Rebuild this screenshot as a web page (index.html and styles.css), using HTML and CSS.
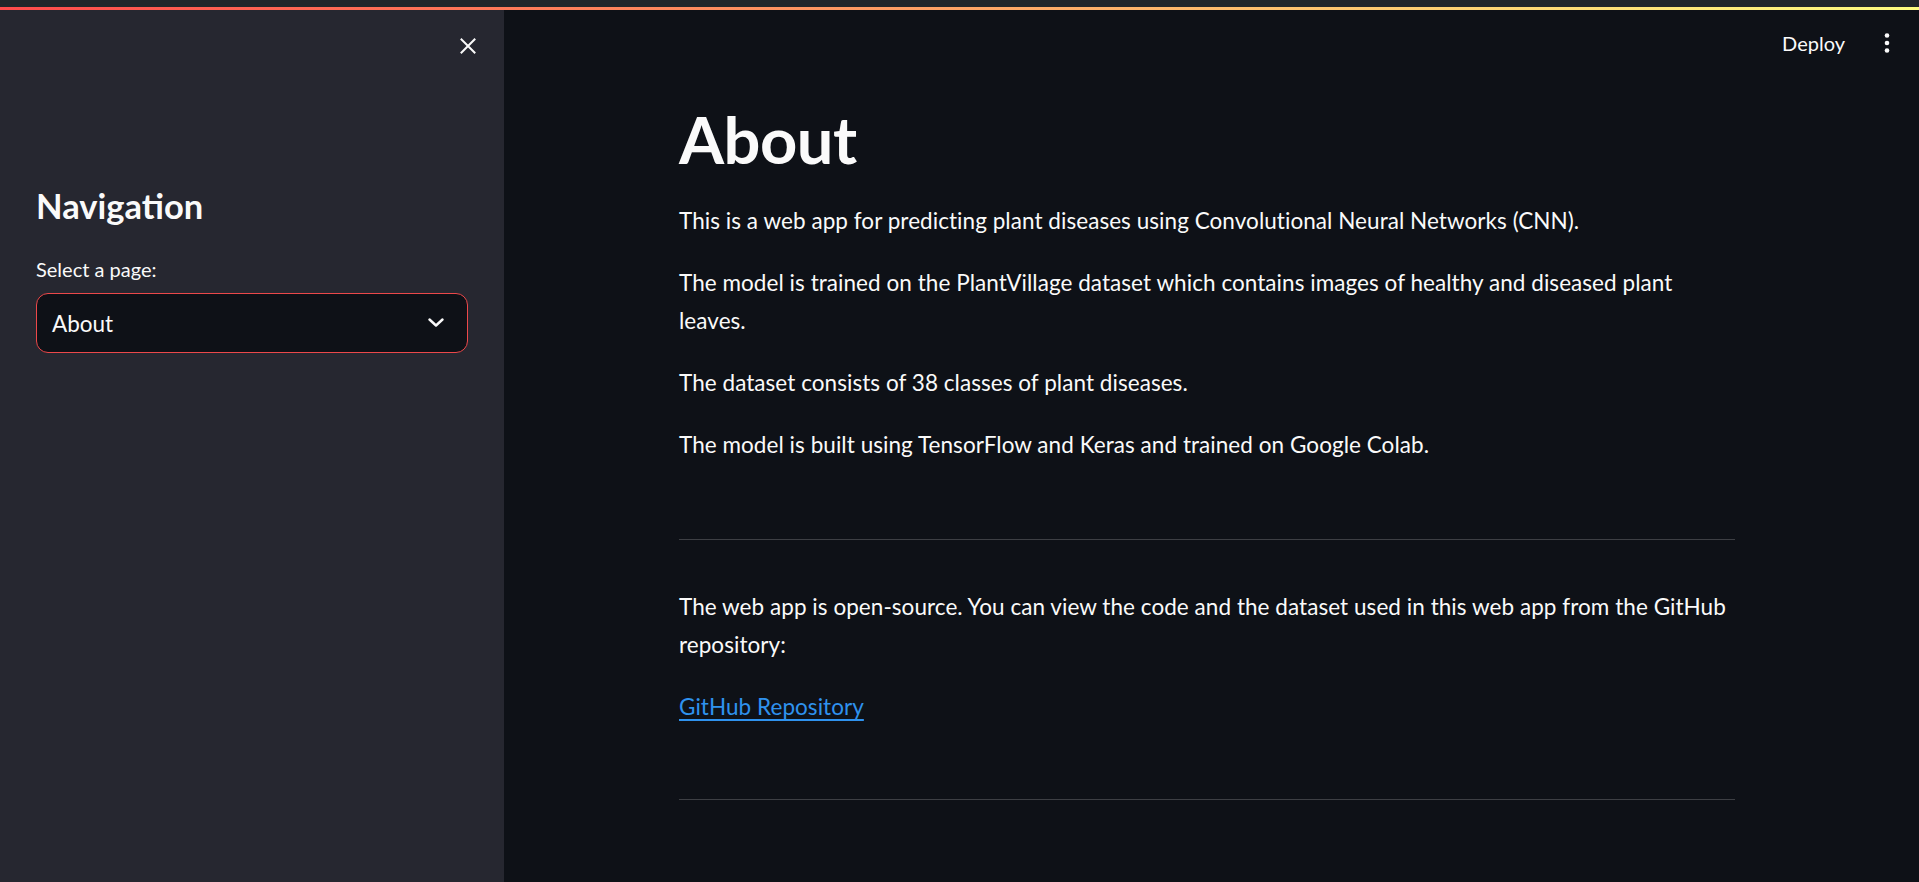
FILE: index.html
```html
<!DOCTYPE html>
<html lang="en">
<head>
<meta charset="utf-8">
<title>About</title>
<link rel="stylesheet" href="styles.css">
</head>
<body>
<div class="chrome-strip"></div>
<div class="decoration"></div>
<div class="app">
  <aside class="sidebar">
    <div class="sidebar-header">
      <svg class="close-icon" width="16" height="16" viewBox="0 0 16 16" aria-hidden="true">
        <path d="M1.5 1.5 L14.5 14.5 M14.5 1.5 L1.5 14.5" stroke="#fafafa" stroke-width="2" stroke-linecap="square" fill="none"/>
      </svg>
    </div>
    <div class="sidebar-content">
      <h1 class="sidebar-title">Navigation</h1>
      <label class="field-label">Select a page:</label>
      <div class="select">
        <span class="select-value">About</span>
        <svg class="chevron" width="16" height="16" viewBox="0 0 16 16" aria-hidden="true">
          <path d="M1.5 4.5 L8 10.5 L14.5 4.5" stroke="#fafafa" stroke-width="2.4" fill="none" stroke-linecap="round" stroke-linejoin="round"/>
        </svg>
      </div>
    </div>
  </aside>
  <main class="main">
    <header class="topbar">
      <span class="deploy">Deploy</span>
      <svg class="kebab" width="10" height="24" viewBox="0 0 10 24" aria-hidden="true">
        <circle cx="5" cy="4.5" r="2.3" fill="#fafafa"/>
        <circle cx="5" cy="12" r="2.3" fill="#fafafa"/>
        <circle cx="5" cy="19.5" r="2.3" fill="#fafafa"/>
      </svg>
    </header>
    <div class="block">
      <h1 class="page-title">About</h1>
      <p class="text">This is a web app for predicting plant diseases using Convolutional Neural Networks (CNN).</p>
      <p class="text">The model is trained on the PlantVillage dataset which contains images of healthy and diseased plant leaves.</p>
      <p class="text">The dataset consists of 38 classes of plant diseases.</p>
      <p class="text">The model is built using TensorFlow and Keras and trained on Google Colab.</p>
      <hr class="divider">
      <p class="text">The web app is open-source. You can view the code and the dataset used in this web app from the GitHub repository:</p>
      <p class="text"><a class="link" href="#">GitHub Repository</a></p>
      <hr class="divider divider-end">
    </div>
  </main>
</div>
</body>
</html>
```

FILE: styles.css
```css
* {
  box-sizing: border-box;
}

html, body {
  margin: 0;
  padding: 0;
  height: 100%;
}

body {
  background: #0e1117;
  color: #fafafa;
  font-family: Lato, "Noto Sans", sans-serif;
  overflow: hidden;
}

.chrome-strip {
  height: 7px;
  background: #22262a;
}

.decoration {
  height: 3px;
  background: linear-gradient(90deg, rgb(255, 75, 75), rgb(255, 253, 128));
}

.app {
  display: flex;
  height: calc(100vh - 10px);
}

/* Sidebar */
.sidebar {
  width: 504px;
  flex: 0 0 504px;
  background: #262730;
  display: flex;
  flex-direction: column;
}

.sidebar-header {
  display: flex;
  justify-content: flex-end;
  padding: 28px 28px 0 0;
}

.close-icon {
  display: block;
}

.sidebar-content {
  padding: 0 36px;
  display: flex;
  flex-direction: column;
}

.sidebar-title {
  margin: 132px 0 0;
  font-size: 34.5px;
  font-weight: 700;
  line-height: 40px;
  height: 40px;
}

.field-label {
  margin-top: 28px;
  font-size: 20px;
  line-height: 30px;
  height: 30px;
}

.select {
  margin-top: 9px;
  height: 60px;
  border: 1px solid rgb(236, 72, 74);
  border-radius: 12px;
  background: #0e1117;
  display: flex;
  align-items: center;
  justify-content: space-between;
  padding: 0 23px 0 15px;
}

.select-value {
  font-size: 22.5px;
  line-height: 30px;
  padding-top: 1px;
}

.chevron {
  display: block;
}

/* Main */
.main {
  flex: 1;
  display: flex;
  flex-direction: column;
  padding-right: 9px;
  min-width: 0;
}

.topbar {
  height: 66px;
  flex: 0 0 66px;
  display: flex;
  align-items: center;
  justify-content: flex-end;
  padding-right: 18px;
}

.deploy {
  font-size: 20px;
  line-height: 24px;
  margin-right: 37px;
}

.kebab {
  display: block;
}

.block {
  width: 1056px;
  margin: 0 auto;
  padding-top: 24px;
  display: flex;
  flex-direction: column;
  gap: 24px;
}

.page-title {
  margin: 0;
  font-size: 65px;
  font-weight: 700;
  line-height: 78px;
  height: 78px;
  letter-spacing: -0.5px;
}

.text {
  margin: 0;
  font-size: 22.5px;
  line-height: 38px;
  letter-spacing: 0.05px;
}

.link {
  color: #2f92ee;
  text-decoration: underline;
  text-decoration-thickness: 1.5px;
  text-underline-offset: 4px;
}

.divider {
  border: none;
  height: 1px;
  background: rgba(250, 250, 250, 0.2);
  margin: 51px 0 24px;
}

.divider-end {
  margin-top: 49px;
}
```
